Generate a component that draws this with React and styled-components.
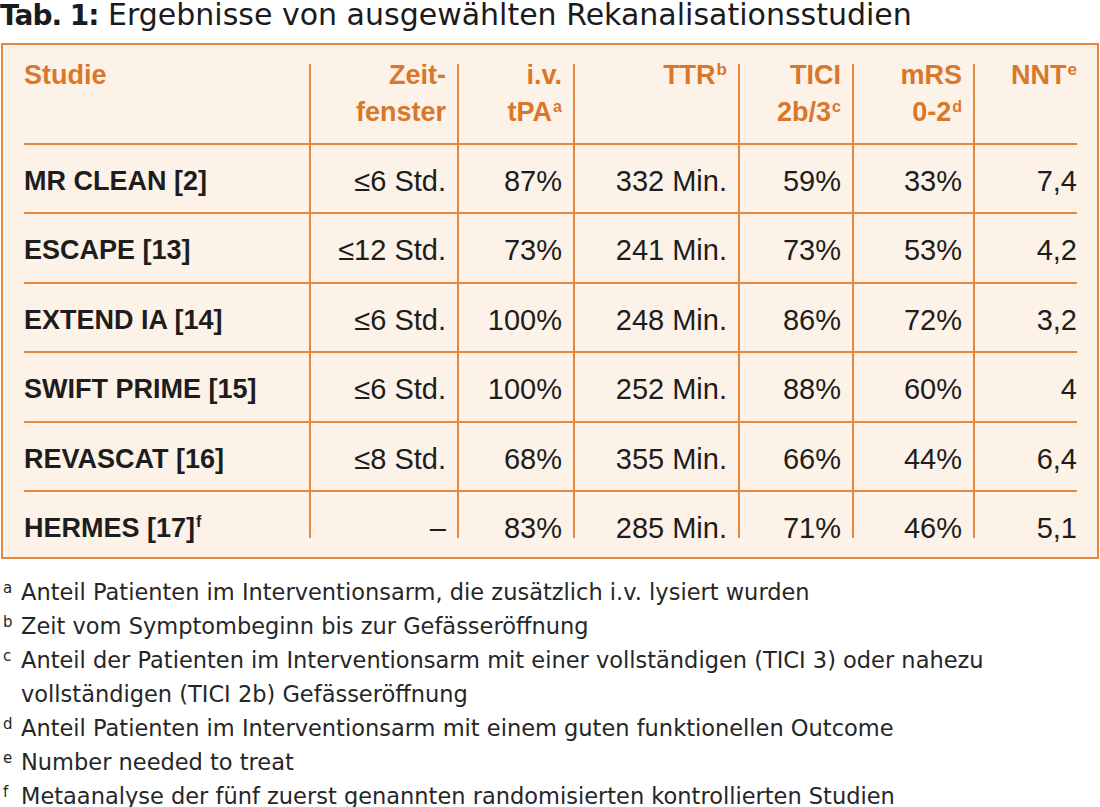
import React from "react";
import styled, { createGlobalStyle } from "styled-components";

const Global = createGlobalStyle`
body{
  margin:0;
  background:#fff;
}
`;

const ORANGE = "#e2893f";
const HEAD = "#d9772a";

const Page = styled.div`
width:1100px;
font-family:"Liberation Sans", Arial, sans-serif;
color:#1d1d1d;
`;

const Title = styled.h1`
margin:0;
font-family:"DejaVu Sans", sans-serif;
font-weight:400;
font-size:30px;
line-height:30px;
color:#1b1b1b;
white-space:nowrap;
& b{
  font-weight:700;
  letter-spacing:-1px;
  font-size:28px;
}
`;

const Box = styled.div`
margin:12px 0 0 1px;
width:1098px;
box-sizing:border-box;
border:2px solid ${ORANGE};
background:#fdf2e8;
padding:19px 20px 19px 21px;
`;

const Grid = styled.div`
display:grid;
grid-template-columns:285px 148px 116px 165px 114px 121px 104px;
`;

const HeadCell = styled.div`
height:79px;
box-sizing:border-box;
color:${HEAD};
font-weight:700;
font-size:27px;
line-height:37px;
text-align:${(p) => (p.first ? "left" : "right")};
padding-right:${(p) => (p.first || p.last ? "0" : "11px")};
border-left:${(p) => (p.first ? "none" : `2px solid ${ORANGE}`)};
& > div{
  margin-top:-7px;
}
`;

const Cell = styled.div`
height:${(p) => (p.end ? "48px" : "69.4px")};
box-sizing:border-box;
border-top:2px solid ${ORANGE};
border-left:${(p) => (p.first ? "none" : `2px solid ${ORANGE}`)};
padding-top:21px;
padding-right:${(p) => (p.first || p.last ? "0" : "11px")};
text-align:${(p) => (p.first ? "left" : "right")};
font-weight:${(p) => (p.first ? 700 : 400)};
font-size:${(p) => (p.first ? "27px" : "29px")};
line-height:30px;
color:#1d1d1d;
white-space:nowrap;
`;

const Sup = styled.span`
font-size:${(p) => p.size || 17}px;
font-weight:700;
vertical-align:${(p) => p.raise || 9}px;
line-height:0;
margin-left:1px;
`;

const Notes = styled.div`
margin-top:16px;
padding-left:3px;
font-family:"DejaVu Sans", sans-serif;
font-size:22.5px;
line-height:34px;
color:#262626;
`;

const Note = styled.div`
display:grid;
grid-template-columns:18px 1fr;
`;

const Mark = styled.span`
font-size:15px;
line-height:26px;
`;

const NoteText = styled.span`
max-width:${(p) => (p.wrap ? "990px" : "none")};
`;

const heads = [
  ["Studie"],
  ["Zeit-", "fenster"],
  ["i.v.", <>tPA<Sup size={16}>a</Sup></>],
  [<>TTR<Sup size={17}>b</Sup></>],
  ["TICI", <>2b/3<Sup size={16}>c</Sup></>],
  ["mRS", <>0-2<Sup size={16}>d</Sup></>],
  [<>NNT<Sup size={17}>e</Sup></>],
];

const rows = [
  ["MR CLEAN [2]", "≤6 Std.", "87%", "332 Min.", "59%", "33%", "7,4"],
  ["ESCAPE [13]", "≤12 Std.", "73%", "241 Min.", "73%", "53%", "4,2"],
  ["EXTEND IA [14]", "≤6 Std.", "100%", "248 Min.", "86%", "72%", "3,2"],
  ["SWIFT PRIME [15]", "≤6 Std.", "100%", "252 Min.", "88%", "60%", "4"],
  ["REVASCAT [16]", "≤8 Std.", "68%", "355 Min.", "66%", "44%", "6,4"],
  [<>HERMES [17]<Sup size={16} raise={10}>f</Sup></>, "–", "83%", "285 Min.", "71%", "46%", "5,1"],
];

const notes = [
  ["a", "Anteil Patienten im Interventionsarm, die zusätzlich i.v. lysiert wurden"],
  ["b", "Zeit vom Symptombeginn bis zur Gefässeröffnung"],
  ["c", "Anteil der Patienten im Interventionsarm mit einer vollständigen (TICI 3) oder nahezu vollständigen (TICI 2b) Gefässeröffnung"],
  ["d", "Anteil Patienten im Interventionsarm mit einem guten funktionellen Outcome"],
  ["e", "Number needed to treat"],
  ["f", "Metaanalyse der fünf zuerst genannten randomisierten kontrollierten Studien"],
];

export default function App() {
  return (
    <Page>
      <Global />
      <Title>
        <b>Tab. 1:</b> Ergebnisse von ausgewählten Rekanalisationsstudien
      </Title>
      <Box>
        <Grid>
          {heads.map((h, i) => (
            <HeadCell key={i} first={i === 0} last={i === heads.length - 1}>
              <div>
                {h.map((line, j) => (
                  <div key={j}>{line}</div>
                ))}
              </div>
            </HeadCell>
          ))}
          {rows.map((r, ri) =>
            r.map((c, ci) => (
              <Cell
                key={ri + "-" + ci}
                first={ci === 0}
                last={ci === r.length - 1}
                end={ri === rows.length - 1}
              >
                {c}
              </Cell>
            ))
          )}
        </Grid>
      </Box>
      <Notes>
        {notes.map(([m, t]) => (
          <Note key={m}>
            <Mark>{m}</Mark>
            <NoteText wrap={m === "c"}>{t}</NoteText>
          </Note>
        ))}
      </Notes>
    </Page>
  );
}
